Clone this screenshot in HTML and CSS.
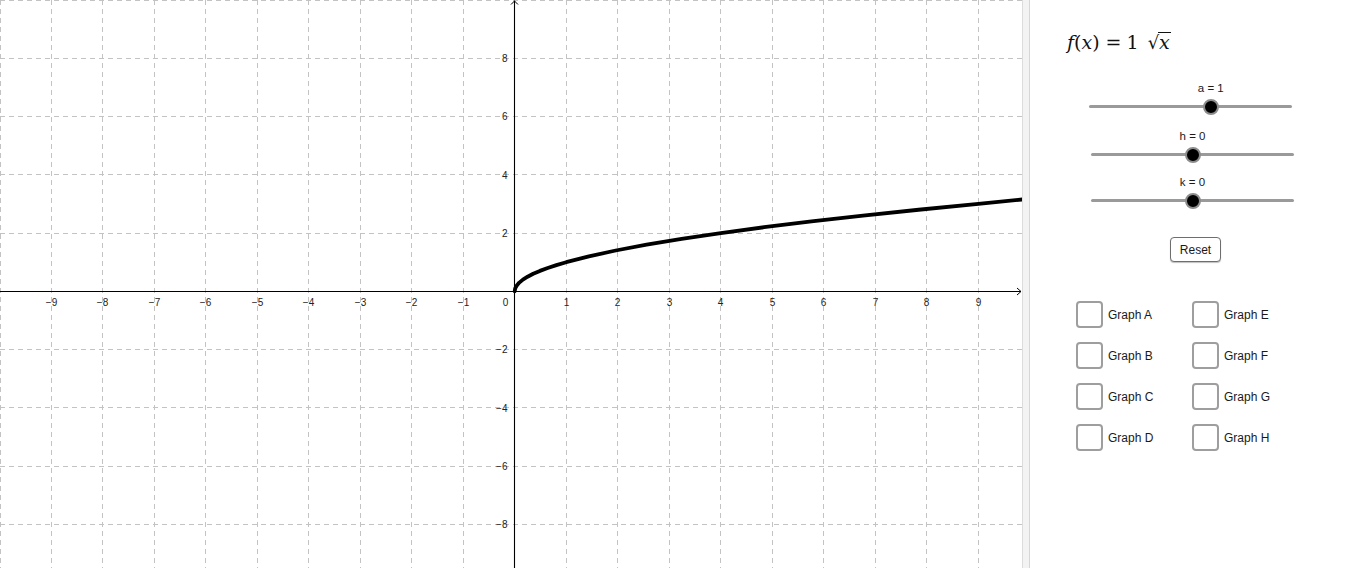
FILE: index.html
```html
<!DOCTYPE html>
<html lang="en">
<head>
<meta charset="utf-8">
<title>Square root transformations</title>
<link rel="stylesheet" href="styles.css">
</head>
<body>
<div class="app">
  <div class="graph">
    <svg class="plot" width="1022" height="568" viewBox="0 0 1022 568" xmlns="http://www.w3.org/2000/svg">
      <path class="grid" d="M0.5 0V568M51.5 0V568M102.5 0V568M154.5 0V568M205.5 0V568M257.5 0V568M308.5 0V568M360.5 0V568M411.5 0V568M463.5 0V568M566.5 0V568M617.5 0V568M669.5 0V568M720.5 0V568M772.5 0V568M823.5 0V568M875.5 0V568M926.5 0V568M978.5 0V568"/>
      <path class="grid" d="M0 0.5H1022M0 58.5H1022M0 116.5H1022M0 174.5H1022M0 233.5H1022M0 349.5H1022M0 407.5H1022M0 466.5H1022M0 524.5H1022"/>
      <path class="axis" d="M0 291.5H1021M514.5 0.5V568"/>
      <path class="arrow" d="M511 4.5L514.5 1L518 4.5M1017 288L1021 291.5L1017 295"/>
      <g class="xlabels">
        <text x="51.5" y="306">−9</text>
        <text x="102.5" y="306">−8</text>
        <text x="154.5" y="306">−7</text>
        <text x="205.5" y="306">−6</text>
        <text x="257.5" y="306">−5</text>
        <text x="308.5" y="306">−4</text>
        <text x="360.5" y="306">−3</text>
        <text x="411.5" y="306">−2</text>
        <text x="463.5" y="306">−1</text>
        <text x="505.5" y="306">0</text>
        <text x="566.5" y="306">1</text>
        <text x="617.5" y="306">2</text>
        <text x="669.5" y="306">3</text>
        <text x="720.5" y="306">4</text>
        <text x="772.5" y="306">5</text>
        <text x="823.5" y="306">6</text>
        <text x="875.5" y="306">7</text>
        <text x="926.5" y="306">8</text>
        <text x="978.5" y="306">9</text>
      </g>
      <g class="ylabels">
        <text x="507.5" y="62">8</text>
        <text x="507.5" y="120">6</text>
        <text x="507.5" y="178.5">4</text>
        <text x="507.5" y="237">2</text>
        <text x="507.5" y="353">−2</text>
        <text x="507.5" y="411.5">−4</text>
        <text x="507.5" y="470">−6</text>
        <text x="507.5" y="528">−8</text>
      </g>
      <polyline class="curve" points="514.7,291.3 515.2,288.4 516.8,285.5 519.3,282.6 522.9,279.6 527.6,276.7 533.2,273.8 539.9,270.9 547.7,268.0 556.4,265.1 566.2,262.2 588.9,256.35 615.7,250.5 646.6,244.7 681.6,238.9 720.8,233.05 764.1,227.2 811.5,221.4 863.0,215.6 918.6,209.75 978.4,203.9 1024,199.3"/>
    </svg>
  </div>
  <div class="divider"></div>
  <div class="panel">
    <div class="formula">
      <span class="it">f</span><span>(</span><span class="it">x</span><span>)</span>
      <span class="eq">=</span>
      <span class="num">1</span>
      <span class="sqrt"><span class="rad">√</span><span class="radicand it">x</span></span>
    </div>

    <div class="slider slider-a">
      <div class="slider-label" style="padding-left: 60%"><span>a = 1</span></div>
      <div class="track"><div class="knob" style="left: 60%"></div></div>
    </div>
    <div class="slider slider-h">
      <div class="slider-label" style="padding-left: 50%"><span>h = 0</span></div>
      <div class="track"><div class="knob" style="left: 50%"></div></div>
    </div>
    <div class="slider slider-k">
      <div class="slider-label" style="padding-left: 50%"><span>k = 0</span></div>
      <div class="track"><div class="knob" style="left: 50%"></div></div>
    </div>

    <button class="reset" type="button">Reset</button>

    <div class="checks">
      <label class="check"><span class="box"></span><span>Graph A</span></label>
      <label class="check"><span class="box"></span><span>Graph E</span></label>
      <label class="check"><span class="box"></span><span>Graph B</span></label>
      <label class="check"><span class="box"></span><span>Graph F</span></label>
      <label class="check"><span class="box"></span><span>Graph C</span></label>
      <label class="check"><span class="box"></span><span>Graph G</span></label>
      <label class="check"><span class="box"></span><span>Graph D</span></label>
      <label class="check"><span class="box"></span><span>Graph H</span></label>
    </div>
  </div>
</div>
</body>
</html>
```
FILE: styles.css
```css
html, body {
  margin: 0;
  padding: 0;
  background: #ffffff;
}

body {
  font-family: "Liberation Sans", Arial, sans-serif;
  color: #1a1a1a;
  overflow: hidden;
}

.app {
  display: flex;
  width: 1366px;
  height: 568px;
}

.graph {
  flex: 0 0 1022px;
  height: 568px;
  overflow: hidden;
  background: #ffffff;
}

.plot {
  display: block;
}

.grid {
  fill: none;
  stroke: #c3c3c3;
  stroke-width: 1;
  stroke-dasharray: 5 4;
}

.axis {
  fill: none;
  stroke: #000000;
  stroke-width: 1.1;
}

.arrow {
  fill: none;
  stroke: #000000;
  stroke-width: 1;
}

.xlabels text,
.ylabels text {
  font-family: "Liberation Sans", Arial, sans-serif;
  font-size: 10px;
  fill: #222222;
}

.xlabels text {
  text-anchor: middle;
}

.ylabels text {
  text-anchor: end;
}

.curve {
  fill: none;
  stroke: #000000;
  stroke-width: 3.8;
  stroke-linecap: round;
  stroke-linejoin: round;
}

.divider {
  flex: 0 0 8px;
  box-sizing: border-box;
  height: 568px;
  background: #f3f3f3;
  border-left: 1px solid #dcdcdc;
  border-right: 1px solid #d6d6d6;
}

.panel {
  flex: 1 1 auto;
  display: flex;
  flex-direction: column;
  align-items: flex-start;
  background: #ffffff;
}

/* formula */
.formula {
  margin: 30px 0 0 37px;
  height: 24px;
  line-height: 24px;
  font-family: "DejaVu Serif", "Liberation Serif", serif;
  font-size: 19px;
  color: #111111;
  white-space: nowrap;
  display: flex;
  align-items: baseline;
}

.formula .it {
  font-style: italic;
}

.formula .eq {
  margin: 0 5px 0 6px;
}

.formula .num {
  margin-right: 9px;
}

.sqrt {
  display: inline-flex;
  align-items: baseline;
}

.rad {
  font-style: normal;
  font-size: 18px;
}

.radicand {
  display: inline-block;
  border-top: 1px solid #111111;
  line-height: 18px;
  padding: 0 1px 0 1px;
  margin-left: -1px;
}

/* sliders */
.slider {
  width: 203px;
}

.slider-a {
  margin: 27px 0 0 59px;
}

.slider-h {
  margin: 21px 0 0 61px;
}

.slider-k {
  margin: 19px 0 0 61px;
}

.slider-label {
  box-sizing: border-box;
  height: 14px;
  line-height: 14px;
  font-size: 11.5px;
  color: #1a1a1a;
  white-space: nowrap;
}

.slider-label span {
  display: inline-block;
  transform: translateX(-50%);
}

.track {
  position: relative;
  margin-top: 10px;
  height: 3px;
  border-radius: 2px;
  background: #9a9a9a;
}

.knob {
  position: absolute;
  top: 50%;
  width: 12px;
  height: 12px;
  border: 2.5px solid #8c8c8c;
  border-radius: 50%;
  background: #000000;
  transform: translate(-50%, -50%);
}

/* reset button */
.reset {
  margin: 35px 0 0 140px;
  width: 51px;
  height: 25px;
  padding: 0;
  box-sizing: border-box;
  border: 1px solid #6e6e6e;
  border-radius: 4px;
  background: #ffffff;
  box-shadow: 0 1px 1px rgba(0, 0, 0, 0.25);
  font-family: "Liberation Sans", Arial, sans-serif;
  font-size: 12px;
  color: #1a1a1a;
}

/* checkboxes */
.checks {
  margin: 39px 0 0 46px;
  display: grid;
  grid-template-columns: 116px 116px;
  row-gap: 14px;
}

.check {
  display: flex;
  align-items: center;
  gap: 5px;
  font-size: 12px;
  color: #1a1a1a;
}

.box {
  box-sizing: border-box;
  width: 27px;
  height: 27px;
  border: 2px solid #9e9e9e;
  border-radius: 4px;
  background: #ffffff;
}
```
